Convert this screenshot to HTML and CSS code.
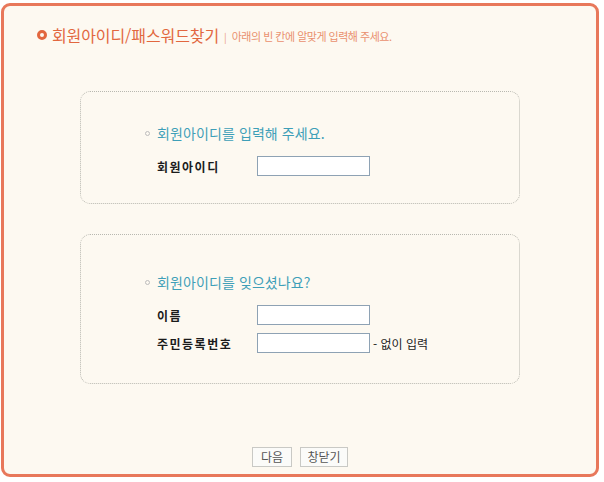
FILE: index.html
```html
<!DOCTYPE html>
<html lang="ko">
<head>
<meta charset="utf-8">
<title>회원아이디/패스워드찾기</title>
<link rel="stylesheet" href="styles.css">
</head>
<body>
<div class="frame">
  <div class="header">
    <span class="ring"></span>
    <h1 class="title">회원아이디/패스워드찾기</h1>
    <span class="sep">|</span>
    <span class="subtitle">아래의 빈 칸에 알맞게 입력해 주세요.</span>
  </div>

  <div class="box box-id">
    <div class="heading"><span class="dot"></span>회원아이디를 입력해 주세요.</div>
    <div class="row">
      <label class="label">회원아이디</label>
      <input class="field" type="text">
    </div>
  </div>

  <div class="box box-forgot">
    <div class="heading"><span class="dot"></span>회원아이디를 잊으셨나요?</div>
    <div class="row">
      <label class="label">이름</label>
      <input class="field" type="text">
    </div>
    <div class="row row-next">
      <label class="label">주민등록번호</label>
      <input class="field" type="text">
      <span class="hint">- 없이 입력</span>
    </div>
  </div>

  <div class="buttons">
    <button class="btn btn-next" type="button">다음</button>
    <button class="btn btn-close" type="button">창닫기</button>
  </div>
</div>
</body>
</html>
```

FILE: styles.css
```css
html, body {
  margin: 0;
  padding: 0;
  background: #ffffff;
  font-family: "Noto Sans CJK KR", "Noto Sans", sans-serif;
}

.frame {
  margin: 3px 0 0 1px;
  width: 598px;
  height: 474px;
  box-sizing: border-box;
  border: 3px solid #e8785b;
  border-radius: 9px;
  background: #fdf9f1;
  padding-top: 19px;
}

.header {
  display: flex;
  align-items: center;
  height: 20px;
  padding-left: 33px;
}

.ring {
  width: 10px;
  height: 10px;
  box-sizing: border-box;
  border: 3px solid #e2673f;
  border-radius: 50%;
  margin-right: 5px;
}

.title {
  margin: 0;
  font-size: 16px;
  font-weight: 400;
  line-height: 20px;
  letter-spacing: -0.1px;
  color: #e2673f;
}

.sep {
  font-size: 10px;
  color: #eaa083;
  margin: 2px 5px 0 5px;
}

.subtitle {
  font-size: 11px;
  letter-spacing: -0.5px;
  color: #e9906e;
  margin-top: 2px;
}

.box {
  margin-left: 76px;
  width: 440px;
  box-sizing: border-box;
  border: 1px dotted #b8b8b0;
  border-radius: 10px;
  padding-left: 76px;
}

.box-id {
  margin-top: 46px;
  height: 113px;
  padding-top: 32px;
}

.box-forgot {
  margin-top: 30px;
  height: 150px;
  padding-top: 38px;
}

.heading {
  display: flex;
  align-items: center;
  height: 18px;
  margin-left: -12px;
  font-size: 14px;
  letter-spacing: 0.1px;
  color: #3e9fb8;
}

.dot {
  width: 5px;
  height: 5px;
  box-sizing: border-box;
  border: 1px solid #bdbdbd;
  border-radius: 50%;
  margin-right: 7px;
}

.row {
  display: flex;
  align-items: center;
  margin-top: 14px;
  height: 20px;
}

.row-next {
  margin-top: 8px;
}

.label {
  width: 100px;
  font-size: 12px;
  font-weight: 700;
  letter-spacing: 1.5px;
  color: #1b1b1b;
}

.field {
  width: 113px;
  height: 20px;
  box-sizing: border-box;
  margin: 0;
  padding: 0 3px;
  border: 1px solid #8ea2b4;
  background: #ffffff;
  border-radius: 0;
  outline: none;
}

.hint {
  margin-left: 3px;
  font-size: 12px;
  color: #222222;
}

.buttons {
  display: flex;
  justify-content: center;
  gap: 8px;
  margin-top: 63px;
}

.btn {
  height: 20px;
  box-sizing: border-box;
  margin: 0;
  padding: 0;
  border: 1px solid #c9c9c5;
  border-radius: 0;
  background: #fbfbf9;
  font-family: "Noto Sans CJK KR", "Noto Sans", sans-serif;
  font-size: 12px;
  line-height: 16px;
  color: #555555;
}

.btn-next {
  width: 40px;
}

.btn-close {
  width: 48px;
}
```
